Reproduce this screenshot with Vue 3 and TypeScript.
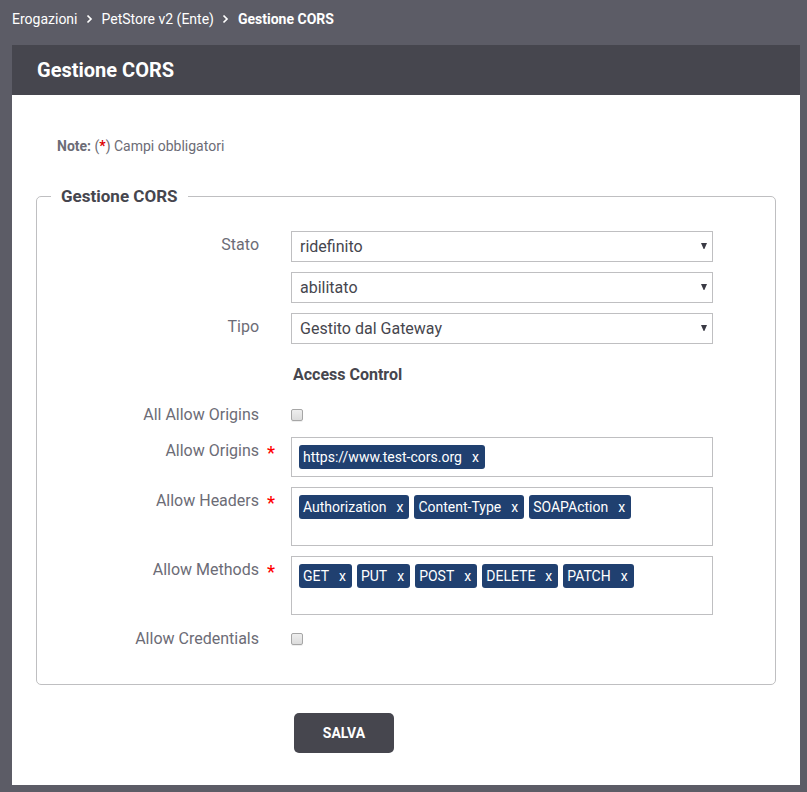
<script setup lang="ts">
import { reactive, ref } from 'vue'

interface TagField {
  id: string
  label: string
  tall: boolean
  tags: string[]
}

const stato = ref('ridefinito')
const abilitazione = ref('abilitato')
const tipo = ref('Gestito dal Gateway')
const allOrigins = ref(false)
const credentials = ref(false)

const tagFields = reactive<TagField[]>([
  { id: 'origins', label: 'Allow Origins', tall: false, tags: ['https://www.test-cors.org'] },
  { id: 'headers', label: 'Allow Headers', tall: true, tags: ['Authorization', 'Content-Type', 'SOAPAction'] },
  { id: 'methods', label: 'Allow Methods', tall: true, tags: ['GET', 'PUT', 'POST', 'DELETE', 'PATCH'] },
])

function removeTag(field: TagField, index: number): void {
  field.tags.splice(index, 1)
}
</script>

<template>
  <div class="page">
    <nav class="breadcrumb">
      <a href="#">Erogazioni</a>
      <svg class="chevron" viewBox="0 0 8 10"><path d="M1.5 1.5 5 5 1.5 8.5" /></svg>
      <a href="#">PetStore v2 (Ente)</a>
      <svg class="chevron" viewBox="0 0 8 10"><path d="M1.5 1.5 5 5 1.5 8.5" /></svg>
      <a href="#" class="current">Gestione CORS</a>
    </nav>

    <main class="panel">
      <h1 class="panel-title">Gestione CORS</h1>
      <form class="panel-body" @submit.prevent>
        <p class="note"><strong>Note:</strong> (<em>*</em>) Campi obbligatori</p>

        <fieldset class="group">
          <legend>Gestione CORS</legend>

          <div class="row">
            <label id="stato-label" class="label" for="stato">Stato</label>
            <div class="control select">
              <select id="stato" v-model="stato">
                <option>ridefinito</option>
                <option>default</option>
              </select>
              <svg class="arrow" viewBox="0 0 6 6"><path d="M0 0h6L3.4 6h-.8z" /></svg>
            </div>
          </div>

          <div class="row">
            <div class="control select">
              <select v-model="abilitazione" aria-labelledby="stato-label">
                <option>abilitato</option>
                <option>disabilitato</option>
              </select>
              <svg class="arrow" viewBox="0 0 6 6"><path d="M0 0h6L3.4 6h-.8z" /></svg>
            </div>
          </div>

          <div class="row">
            <label class="label" for="tipo">Tipo</label>
            <div class="control select">
              <select id="tipo" v-model="tipo">
                <option>Gestito dal Gateway</option>
                <option>Gestito dall'applicativo</option>
              </select>
              <svg class="arrow" viewBox="0 0 6 6"><path d="M0 0h6L3.4 6h-.8z" /></svg>
            </div>
          </div>

          <div class="row">
            <h2 class="control subtitle">Access Control</h2>
          </div>

          <div class="row check-row">
            <label class="label" for="all-origins">All Allow Origins</label>
            <input id="all-origins" v-model="allOrigins" class="control" type="checkbox" />
          </div>

          <div v-for="field in tagFields" :key="field.id" class="row">
            <span :id="field.id" class="label">{{ field.label }}</span>
            <em class="required">*</em>
            <ul class="control tags" :class="{ tall: field.tall }" :aria-labelledby="field.id">
              <li v-for="(tag, index) in field.tags" :key="tag" class="tag">
                <span>{{ tag }}</span>
                <button type="button" @click="removeTag(field, index)">x</button>
              </li>
            </ul>
          </div>

          <div class="row check-row">
            <label class="label" for="credentials">Allow Credentials</label>
            <input id="credentials" v-model="credentials" class="control" type="checkbox" />
          </div>
        </fieldset>

        <button class="save" type="submit">SALVA</button>
      </form>
    </main>
  </div>
</template>

<style>
body {
  background: #5c5c66;
}
</style>

<style scoped>
.page {
  padding: 0 7px 7px 12px;
  font-family: Roboto, "Liberation Sans", sans-serif;
  font-size: 16px;
  color: #6c6c76;
}

.breadcrumb {
  display: flex;
  align-items: center;
  gap: 8px;
  height: 38px;
  margin-bottom: 7px;
  font-size: 14px;
}

.breadcrumb a {
  color: #fff;
  text-decoration: none;
}

.breadcrumb .current {
  font-weight: 700;
}

.chevron {
  width: 8px;
  height: 10px;
  fill: none;
  stroke: #fff;
  stroke-width: 1.7;
}

.panel {
  background: #fff;
}

.panel-title {
  margin: 0;
  padding: 0 25px;
  background: #46464e;
  color: #fff;
  font-size: 20px;
  font-weight: 700;
  line-height: 50px;
}

.panel-body {
  padding: 41px 24px 32px;
}

em {
  color: #f00;
  font-style: normal;
}

.note {
  margin: 0 0 30px;
  padding-left: 21px;
  font-size: 14px;
  line-height: 20px;
}

.note em {
  color: #d00;
  font-weight: 700;
}

.group {
  min-width: 0;
  margin: 0;
  padding: 25px 0 33px;
  border: 1px solid #bfbfc1;
  border-radius: 5px;
}

.group legend {
  margin-left: 14px;
  padding: 0 10px;
  color: #46464e;
  font-size: 17px;
  font-weight: 700;
  line-height: 20px;
}

.row {
  display: grid;
  grid-template-columns: 222px 32px minmax(0, 422px);
  align-items: start;
}

.row + .row {
  margin-top: 10px;
}

.label {
  grid-column: 1;
  text-align: right;
  line-height: 27px;
}

.required {
  grid-column: 2;
  height: 27px;
  padding-left: 8px;
  font-size: 18px;
  font-weight: 500;
  line-height: 31px;
}

.control {
  grid-column: 3;
}

.select {
  display: grid;
  align-items: center;
}

.select select {
  grid-area: 1 / 1;
  width: 100%;
  height: 31px;
  padding: 0 24px 0 8px;
  appearance: none;
  border: 1px solid #bfbfc1;
  border-radius: 0;
  background: #fff;
  color: #46464e;
  font: inherit;
}

.arrow {
  grid-area: 1 / 1;
  justify-self: end;
  width: 6px;
  height: 6px;
  margin: 0 6px 1px 0;
  fill: #3a3a44;
  pointer-events: none;
}

.subtitle {
  margin: 0;
  padding: 5px 2px 0;
  color: #46464e;
  font-size: 16px;
  font-weight: 700;
  line-height: 32px;
}

.check-row {
  align-items: center;
  padding-top: 2px;
}

.check-row .label {
  line-height: 24px;
}

.check-row input {
  width: 12px;
  height: 12px;
  margin: 0;
  appearance: none;
  border: 1px solid #a6a6a6;
  border-radius: 2px;
  background: linear-gradient(#eee, #dcdcdc);
  box-shadow: 0 1px 0 #eee;
}

.check-row input:checked {
  background: #204070;
}

.tags {
  display: flex;
  flex-wrap: wrap;
  align-content: flex-start;
  gap: 5px;
  min-height: 40px;
  box-sizing: border-box;
  margin: 0;
  padding: 7px;
  border: 1px solid #bfbfc1;
  list-style: none;
}

.tall {
  min-height: 59px;
}

.tag {
  display: flex;
  gap: 10px;
  padding: 0 6px 0 4px;
  border-radius: 3px;
  background: #204070;
  color: #fff;
  font-size: 14px;
  line-height: 24px;
}

.tag button {
  padding: 0;
  border: 0;
  background: none;
  color: inherit;
  font: inherit;
}

.save {
  display: block;
  width: 100px;
  height: 40px;
  margin: 28px 0 0 258px;
  border: 0;
  border-radius: 5px;
  background: #46464e;
  color: #fff;
  font-family: inherit;
  font-size: 14px;
  font-weight: 700;
}
</style>
